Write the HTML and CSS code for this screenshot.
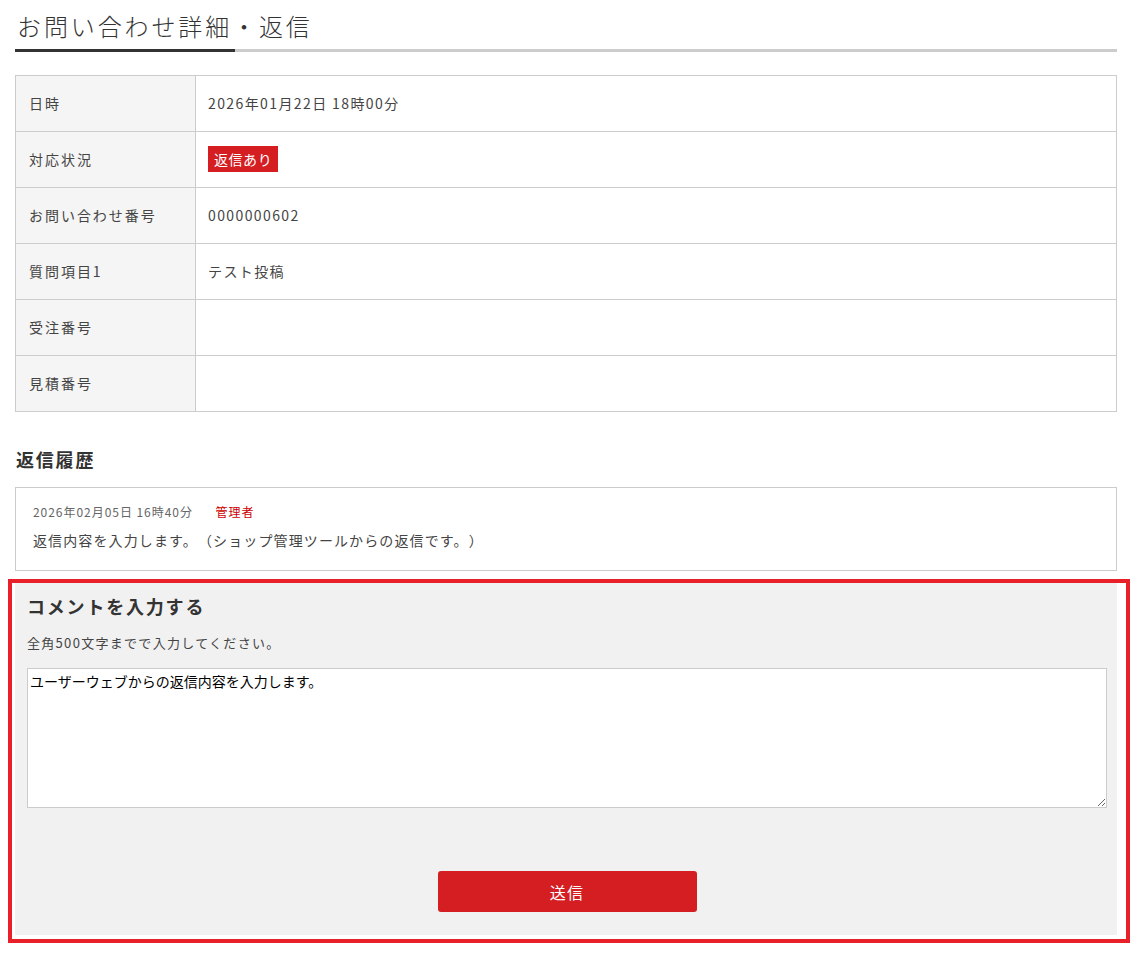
FILE: index.html
```html
<!DOCTYPE html>
<html lang="ja">
<head>
    <meta charset="UTF-8">
    <meta name="viewport" content="width=device-width, initial-scale=1.0">
    <title>お問い合わせ詳細・返信</title>
    <link rel="stylesheet" href="styles.css">
</head>
<body>
    <div class="contact">
        <h1 class="page-title">お問い合わせ詳細・返信</h1>

        <table class="detail">
            <tr>
                <th>日時</th>
                <td>2026年01月22日 18時00分</td>
            </tr>
            <tr>
                <th>対応状況</th>
                <td><span class="badge">返信あり</span></td>
            </tr>
            <tr>
                <th>お問い合わせ番号</th>
                <td>0000000602</td>
            </tr>
            <tr>
                <th>質問項目1</th>
                <td>テスト投稿</td>
            </tr>
            <tr>
                <th>受注番号</th>
                <td></td>
            </tr>
            <tr>
                <th>見積番号</th>
                <td></td>
            </tr>
        </table>

        <h2 class="section-title">返信履歴</h2>
        <div class="history">
            <div class="history-meta">
                <span class="history-date">2026年02月05日 16時40分</span>
                <span class="history-author">管理者</span>
            </div>
            <p class="history-body">返信内容を入力します。（ショップ管理ツールからの返信です。）</p>
        </div>

        <div class="highlight">
            <form class="reply" onsubmit="return false;">
                <h2 class="section-title">コメントを入力する</h2>
                <p class="reply-note">全角500文字までで入力してください。</p>
                <textarea class="reply-text" name="comment">ユーザーウェブからの返信内容を入力します。</textarea>
                <div class="reply-actions">
                    <button class="btn-send" type="submit">送信</button>
                </div>
            </form>
        </div>
    </div>
</body>
</html>
```

FILE: styles.css
```css
body {
    margin: 0;
    background: #fff;
    color: #333;
    font-family: "Noto Sans CJK JP", "Noto Sans", sans-serif;
    text-spacing-trim: space-all;
}
.contact {
    width: 1102px;
    margin-left: 15px;
    padding-top: 8px;
}
.page-title {
    margin: 0;
    padding: 0 0 8px 2px;
    font-size: 24px;
    font-weight: 300;
    line-height: 36px;
    letter-spacing: 0.12em;
    color: #333;
    background:
        linear-gradient(#333, #333) left bottom / 20% 3px no-repeat,
        linear-gradient(#ccc, #ccc) left bottom / 100% 3px no-repeat;
}
.detail {
    width: 100%;
    margin-top: 23px;
    border-collapse: collapse;
    font-size: 14px;
    color: #444;
}
.detail th,
.detail td {
    height: 56px;
    padding: 0 12px 2px;
    border: 1px solid #ccc;
    text-align: left;
    font-weight: 400;
    box-sizing: border-box;
}
.detail th {
    width: 180px;
    padding-left: 13px;
    background: #f5f5f5;
    letter-spacing: 0.14em;
}
.detail td {
    letter-spacing: 0.1em;
}
.badge {
    display: inline-block;
    padding: 0 6px;
    line-height: 26px;
    background: #d41e22;
    color: #fff;
    letter-spacing: 0.04em;
}
.section-title {
    margin: 0;
    font-size: 18px;
    font-weight: 700;
    line-height: 27px;
    letter-spacing: 0.1em;
    color: #333;
}
.contact > .section-title {
    margin-top: 34px;
    padding-left: 1px;
}
.history {
    margin-top: 14px;
    padding: 15px 17px 18px;
    border: 1px solid #ccc;
}
.history-meta {
    font-size: 12px;
    line-height: 18px;
    letter-spacing: 0.08em;
}
.history-date {
    color: #666;
}
.history-author {
    margin-left: 19px;
    color: #c00;
}
.history-body {
    margin: 7px 0 0;
    font-size: 14px;
    line-height: 24px;
    letter-spacing: 0.08em;
    color: #444;
}
.highlight {
    margin: 8px -13px 0 -7px;
    padding: 0 9px 4px 0;
    border: 4px solid #e8202a;
}
.reply {
    margin-left: 3px;
    padding: 10px 10px 23px 12px;
    background: #f1f1f1;
}
.reply-note {
    margin: 13px 0 15px;
    font-size: 13px;
    line-height: 20px;
    letter-spacing: 0.1em;
    color: #444;
}
.reply-text {
    display: block;
    width: 100%;
    height: 140px;
    box-sizing: border-box;
    margin: 0;
    padding: 2px 2px;
    border: 1px solid #ccc;
    background: #fff;
    font-family: "Noto Sans CJK JP", sans-serif;
    font-size: 14px;
    line-height: 20px;
    color: #000;
}
.reply-actions {
    display: flex;
    justify-content: center;
    margin-top: 63px;
}
.btn-send {
    width: 259px;
    height: 41px;
    border: none;
    border-radius: 3px;
    background: #d41e22;
    color: #fff;
    font-family: "Noto Sans CJK JP", sans-serif;
    font-size: 16px;
    letter-spacing: 0.08em;
    cursor: pointer;
}
```
